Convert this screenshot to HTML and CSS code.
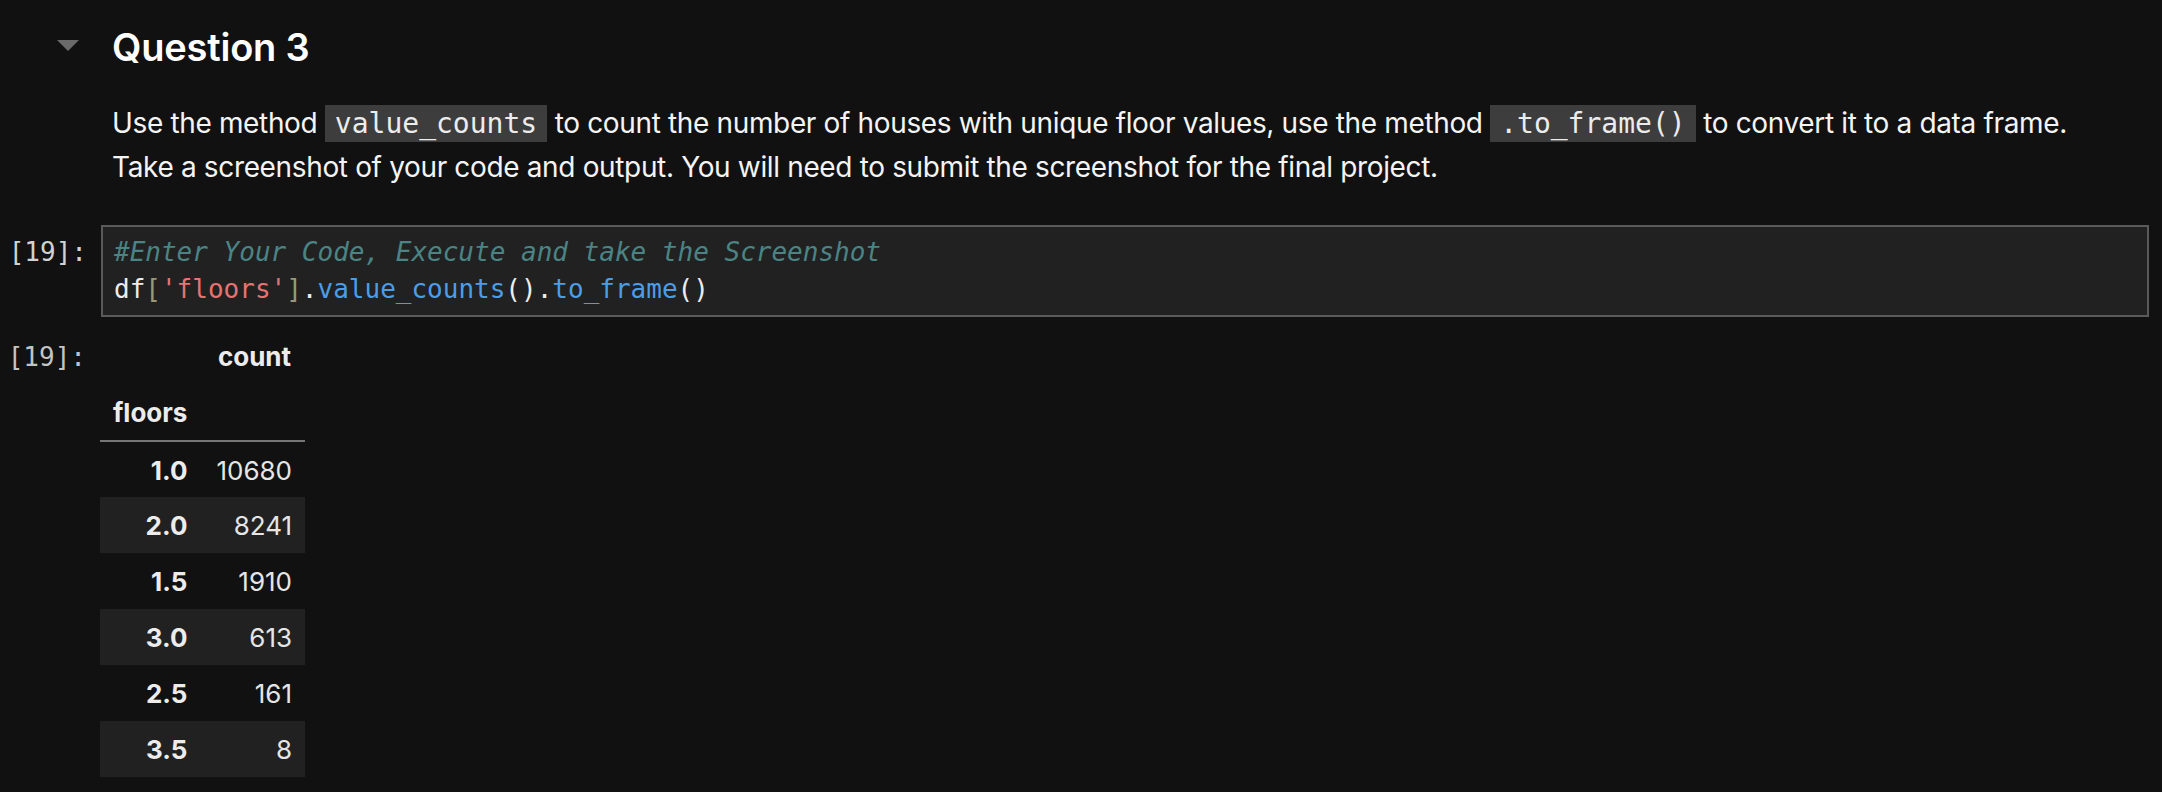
FILE: index.html
```html
<!DOCTYPE html>
<html lang="en">
<head>
<meta charset="utf-8">
<title>Question 3</title>
<link rel="stylesheet" href="styles.css">
</head>
<body>
<div class="notebook">
  <div class="cell md-cell">
    <div class="collapser"><span class="tri"></span></div>
    <div class="md-body">
      <h2 class="heading">Question 3</h2>
      <p class="para">Use the method <code class="inline">value_counts</code> to count the number of houses with unique floor values, use the method <code class="inline">.to_frame()</code> to convert it to a data frame.<br>Take a screenshot of your code and output. You will need to submit the screenshot for the final project.</p>
    </div>
  </div>

  <div class="cell code-cell">
    <div class="prompt in-prompt">[19]:</div>
    <div class="editor">
<pre class="src"><span class="c-comment">#Enter Your Code, Execute and take the Screenshot</span>
<span class="c-var">df</span><span class="c-bracket">[</span><span class="c-string">'floors'</span><span class="c-bracket">]</span><span class="c-var">.</span><span class="c-prop">value_counts</span><span class="c-var">().</span><span class="c-prop">to_frame</span><span class="c-var">()</span></pre>
    </div>
  </div>

  <div class="cell out-cell">
    <div class="prompt out-prompt">[19]:</div>
    <table class="df">
      <thead>
        <tr><th></th><th>count</th></tr>
        <tr class="idx-name"><th>floors</th><th></th></tr>
      </thead>
      <tbody>
        <tr><th>1.0</th><td>10680</td></tr>
        <tr><th>2.0</th><td>8241</td></tr>
        <tr><th>1.5</th><td>1910</td></tr>
        <tr><th>3.0</th><td>613</td></tr>
        <tr><th>2.5</th><td>161</td></tr>
        <tr><th>3.5</th><td>8</td></tr>
      </tbody>
    </table>
  </div>
</div>
</body>
</html>
```

FILE: styles.css
```css
html, body {
  margin: 0;
  padding: 0;
  background: #111111;
}

body {
  width: 2162px;
  height: 792px;
  overflow: hidden;
  font-family: "Inter", "Liberation Sans", sans-serif;
  color: #f4f4f4;
}

.notebook {
  display: flex;
  flex-direction: column;
}

.cell {
  display: flex;
  flex-direction: row;
}

/* markdown cell */
.collapser {
  width: 112px;
  flex: none;
  padding-top: 40px;
  padding-left: 57px;
  box-sizing: border-box;
}

.tri {
  display: block;
  width: 0;
  height: 0;
  border-left: 11px solid transparent;
  border-right: 11px solid transparent;
  border-top: 11px solid #6a6a6a;
}

.md-body {
  flex: 1;
  padding-top: 24px;
}

.heading {
  margin: 0;
  font-size: 38px;
  line-height: 46px;
  font-weight: 600;
  color: #ffffff;
  letter-spacing: -0.2px;
}

.para {
  margin: 31px 0 0 0;
  font-size: 28px;
  line-height: 44px;
  color: #f4f4f4;
  letter-spacing: -0.35px;
}

.inline {
  font-family: "DejaVu Sans Mono", "Liberation Mono", monospace;
  font-size: 28px;
  line-height: 1;
  letter-spacing: 0;
  background: #3d3d3d;
  color: #ececec;
  padding: 2px 10px;
}

/* code cell */
.code-cell {
  margin-top: 36px;
}

.prompt {
  width: 101px;
  flex: none;
  box-sizing: border-box;
  padding-right: 14px;
  text-align: right;
  font-family: "DejaVu Sans Mono", "Liberation Mono", monospace;
  font-size: 26px;
}

.in-prompt {
  padding-top: 9px;
  line-height: 37px;
  color: #d2d2d2;
}

.editor {
  flex: 1;
  margin-right: 13px;
  background: #212121;
  border: 2px solid #5a5a5a;
  padding: 7px 11px;
}

.src {
  margin: 0;
  font-family: "DejaVu Sans Mono", "Liberation Mono", monospace;
  font-size: 26px;
  line-height: 37px;
  color: #ececec;
}

.c-comment { color: #4b8484; font-style: italic; }
.c-var { color: #ececec; }
.c-bracket { color: #999977; }
.c-string { color: #e57373; }
.c-prop { color: #4c9de8; }

/* output cell */
.out-cell {
  margin-top: 12px;
}

.out-prompt {
  width: 100px;
  line-height: 56px;
  color: #c4c4c4;
}

.df {
  border-collapse: collapse;
  font-family: "Inter", "Liberation Sans", sans-serif;
  font-size: 26px;
  color: #e6e6e6;
}

.df th, .df td {
  height: 56px;
  padding: 0 14px 0 13px;
  line-height: 30px;
  text-align: right;
  vertical-align: middle;
  box-sizing: border-box;
}

.df td {
  padding-right: 13px;
  padding-left: 15px;
}

.df tbody th, .df tbody td {
  padding-top: 2px;
}

.df th {
  font-weight: 700;
  color: #ececec;
}

.df td {
  font-weight: 400;
}

.df thead tr.idx-name th {
  text-align: left;
  border-bottom: 2px solid #767676;
}

.df tbody tr:nth-child(even) {
  background: #212121;
}
```
